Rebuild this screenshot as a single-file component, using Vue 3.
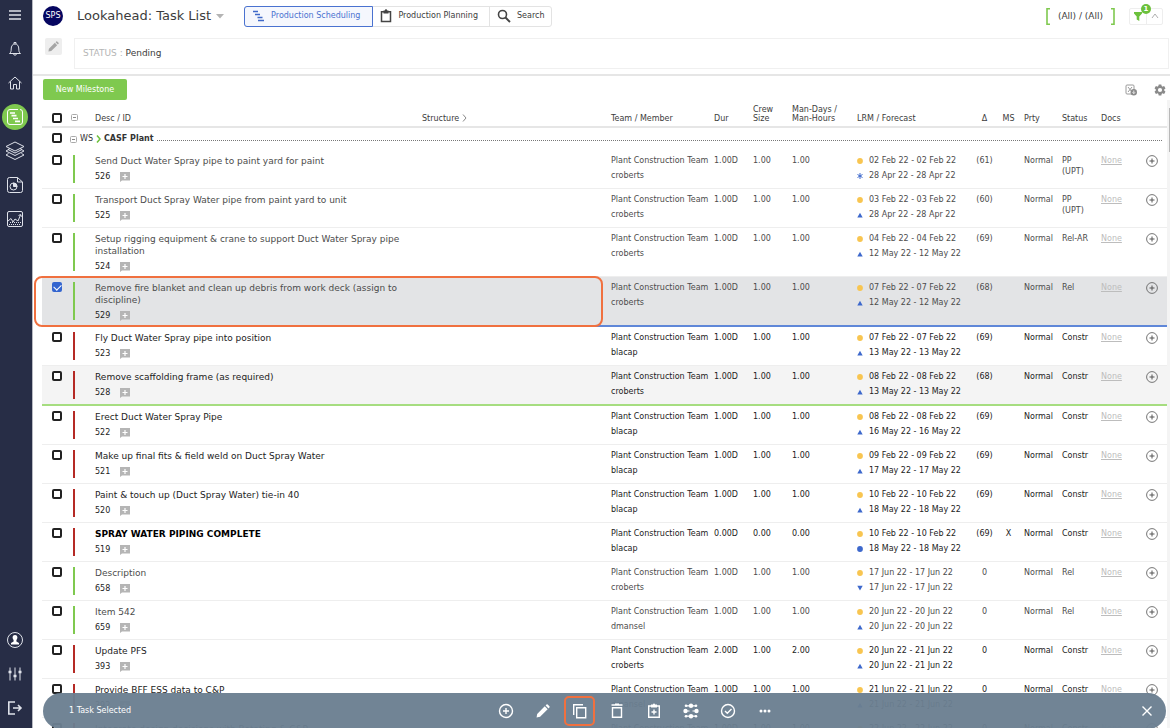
<script setup>
import { ref } from 'vue'

const base = { team: 'Plant Construction Team', dur: '1.00D', crew: '1.00', man: '1.00', mark: 'up', status: 'Constr' }
const tasks = ref([
  { id: 526, desc: 'Send Duct Water Spray pipe to paint yard for paint', member: 'croberts', lrm: '02 Feb 22 - 02 Feb 22', fc: '28 Apr 22 - 28 Apr 22', mark: 'star', delta: '(61)', status: 'PP (UPT)', green: true },
  { id: 525, desc: 'Transport Duct Spray Water pipe from paint yard to unit', member: 'croberts', lrm: '03 Feb 22 - 03 Feb 22', fc: '28 Apr 22 - 28 Apr 22', delta: '(60)', status: 'PP (UPT)', green: true },
  { id: 524, desc: 'Setup rigging equipment & crane to support Duct Water Spray pipe installation', member: 'croberts', lrm: '04 Feb 22 - 04 Feb 22', fc: '12 May 22 - 12 May 22', delta: '(69)', status: 'Rel-AR', green: true },
  { id: 529, desc: 'Remove fire blanket and clean up debris from work deck (assign to discipline)', member: 'croberts', lrm: '07 Feb 22 - 07 Feb 22', fc: '12 May 22 - 12 May 22', delta: '(68)', status: 'Rel', green: true, checked: true, kind: 'selected' },
  { id: 523, desc: 'Fly Duct Water Spray pipe into position', member: 'blacap', lrm: '07 Feb 22 - 07 Feb 22', fc: '13 May 22 - 13 May 22', delta: '(69)' },
  { id: 528, desc: 'Remove scaffolding frame (as required)', member: 'croberts', lrm: '08 Feb 22 - 08 Feb 22', fc: '13 May 22 - 13 May 22', delta: '(68)', kind: 'today' },
  { id: 522, desc: 'Erect Duct Water Spray Pipe', member: 'blacap', lrm: '08 Feb 22 - 08 Feb 22', fc: '16 May 22 - 16 May 22', delta: '(69)' },
  { id: 521, desc: 'Make up final fits & field weld on Duct Spray Water', member: 'blacap', lrm: '09 Feb 22 - 09 Feb 22', fc: '17 May 22 - 17 May 22', delta: '(69)' },
  { id: 520, desc: 'Paint & touch up (Duct Spray Water) tie-in 40', member: 'blacap', lrm: '10 Feb 22 - 10 Feb 22', fc: '18 May 22 - 18 May 22', delta: '(69)' },
  { id: 519, desc: 'SPRAY WATER PIPING COMPLETE', member: 'blacap', dur: '0.00D', crew: '0.00', man: '0.00', lrm: '10 Feb 22 - 10 Feb 22', fc: '18 May 22 - 18 May 22', mark: 'dot', delta: '(69)', ms: 'X', kind: 'milestone' },
  { id: 658, desc: 'Description', member: 'croberts', lrm: '17 Jun 22 - 17 Jun 22', fc: '17 Jun 22 - 17 Jun 22', mark: 'down', delta: '0', status: 'Rel', green: true },
  { id: 659, desc: 'Item 542', member: 'dmansel', lrm: '20 Jun 22 - 20 Jun 22', fc: '20 Jun 22 - 20 Jun 22', delta: '0', status: 'Rel', green: true },
  { id: 393, desc: 'Update PFS', member: 'croberts', dur: '2.00D', man: '2.00', lrm: '20 Jun 22 - 21 Jun 22', fc: '20 Jun 22 - 21 Jun 22', delta: '0' },
  { id: 392, desc: 'Provide BFF ESS data to C&P', member: 'dmansel', lrm: '21 Jun 22 - 21 Jun 22', fc: '21 Jun 22 - 21 Jun 22', delta: '0' },
  { id: 391, desc: 'Integrate design decisions with Rotating & C&P', member: 'dmansel', lrm: '22 Jun 22 - 22 Jun 22', fc: '22 Jun 22 - 22 Jun 22', delta: '0' }
].map(t => ({ ...base, ...t })))
</script>

<template>
  <div class="app">
    <nav class="side" aria-label="Main">
      <button class="nav" aria-label="Menu"><svg width="14" height="12" viewBox="0 0 14 12"><path d="M1 2h12M1 6h12M1 10h12" stroke-width="1.6" /></svg></button>
      <button class="nav" aria-label="Notifications"><svg width="16" height="16" viewBox="0 0 16 16"><path d="M2.500 12.500h11c-1.300-1-1.700-2-1.700-4.500 0-3-1.300-5-3.800-5S4.200 5 4.200 8c0 2.500-.4 3.500-1.700 4.500zM7 3V1.500h2V3M6.500 13c.3 1.600 2.700 1.600 3 0" /></svg></button>
      <button class="nav" aria-label="Home"><svg width="16" height="16" viewBox="0 0 16 16"><path d="M1.500 8L8 2l6.500 6M3.500 6.500V14h3V9.500h3V14h3V6.500" /></svg></button>
      <button class="nav on" aria-label="Scheduling"><svg width="18" height="18" viewBox="0 0 18 18"><path d="M12 1.500H4a2.500 2.500 0 0 0-2.500 2.500v10A2.500 2.500 0 0 0 4 16.500h10a2.500 2.500 0 0 0 2.500-2.500V4A2.500 2.500 0 0 0 14 1.500" /><path d="M4 5h5M5.500 7.700h5M7 10.500h5M9 13.300h5" stroke-width="1.700" /></svg></button>
      <button class="nav" aria-label="Layers"><svg width="22" height="22" viewBox="0 0 22 22"><path d="M11 2l9 4.500-9 4.500-9-4.500zM4.500 9.500L2 11l9 4.500 9-4.500-2.500-1.500M4.500 13.500L2 15l9 4.500 9-4.500-2.500-1.500M6 8.500l-2 1 7 3.500 7-3.500-2-1" /></svg></button>
      <button class="nav" aria-label="Reports"><svg width="18" height="18" viewBox="0 0 18 18"><path d="M3.500 1.500h8l5 4.500v8.500a2 2 0 0 1-2 2h-11a2 2 0 0 1-2-2v-11a2 2 0 0 1 2-2zM11.500 1.500V6h5" /><circle cx="7.500" cy="10.500" r="3.500" /><path d="M7.500 10.500V7a3.500 3.500 0 0 1 3.500 3.500z" fill="#dfe2ea" /></svg></button>
      <button class="nav" aria-label="Analytics"><svg width="18" height="18" viewBox="0 0 18 18"><rect x="1.500" y="1.500" width="15" height="15" rx="1.500" /><path d="M2 11l3-2.500 2 3.500 2-3 3 2 2.500-6M12.500 5.500l2.200-1 .8 2.200" /><path d="M3 14.500h12M4 12.500h11" stroke-dasharray="1 1" /></svg></button>
      <span class="push"></span>
      <button class="nav" aria-label="Profile"><svg width="18" height="18" viewBox="0 0 18 18"><circle cx="9" cy="9" r="7.500" /><path d="M9 4c-1.700 0-2.500 1.200-2.400 2.800.1 1 .5 1.700 1 2.200v1.500L5 12v1.500h8V12l-2.600-1.500V9c.5-.5.9-1.200 1-2.200C11.500 5.200 10.700 4 9 4z" fill="#fff" stroke="none" /></svg></button>
      <button class="nav" aria-label="Settings"><svg width="16" height="16" viewBox="0 0 16 16"><path d="M3 1.500v13M8 1.500v13M13 1.500v13" /><path d="M1.500 6h3M6.500 10h3M11.500 6h3" stroke-width="2.600" /></svg></button>
      <button class="nav" aria-label="Log out"><svg width="16" height="16" viewBox="0 0 16 16"><path d="M8 2H1.800v12H8M6 8h8M11 5l3 3-3 3" stroke-width="1.600" /></svg></button>
    </nav>

    <main class="main">
      <header class="top">
        <span class="logo">SPS</span>
        <h1 class="title">Lookahead: Task List</h1>
        <button class="caret" aria-label="Choose view"><svg width="8" height="5" viewBox="0 0 8 5"><path d="M0 0h8L4 4.500z" fill="#b4b4b4" /></svg></button>
        <div class="tabs">
          <button class="tab active"><svg width="12" height="12" viewBox="0 0 12 12"><path d="M0 1.500h5M2 4.500h5M4.500 7.500h5M5 10.500h6" stroke="#3f68c8" stroke-width="1.500" /></svg>Production Scheduling</button>
          <button class="tab"><svg width="12" height="14" viewBox="0 0 12 14"><path d="M1.500 2.700h9v9.800h-9z" stroke="#444" stroke-width="1.500" fill="none" /><path d="M3.500 1.500h1.300a1.200 1.200 0 0 1 2.400 0h1.300v3h-5z" fill="#444" /></svg>Production Planning</button>
          <button class="tab"><svg width="14" height="14" viewBox="0 0 14 14"><circle cx="5.500" cy="5.500" r="4" stroke="#444" stroke-width="1.600" fill="none" /><path d="M8.500 8.500l4.500 4.500" stroke="#444" stroke-width="1.900" /></svg>Search</button>
        </div>
        <div class="scope">
          <svg width="4" height="17" viewBox="0 0 4 17"><path d="M4 .8H1v15.400h3" /></svg>
          <span>(All) / (All)</span>
          <svg width="4" height="17" viewBox="0 0 4 17"><path d="M0 .8h3v15.400H0" /></svg>
        </div>
        <div class="filter">
          <button aria-label="Filter"><svg width="8" height="9" viewBox="0 0 8 9"><path d="M0 0h8v1.500L5.300 4.500V9L2.700 7.500v-3L0 1.500z" fill="#6cc13c" /></svg></button>
          <button aria-label="Collapse"><svg width="8" height="6" viewBox="0 0 8 6"><path d="M1 5l3-4 3 4" fill="none" stroke="#b0b0b0" /></svg></button>
          <span class="badge">1</span>
        </div>
      </header>

      <section class="status">
        <button class="edit" aria-label="Edit filter"><svg width="11" height="11" viewBox="0 0 24 24"><path d="M1 23l1-6L15 4l5 5L7 22zM16.500 2.500L18 1q1-1 2 0l3 3q1 1 0 2l-1.500 1.500z" fill="#a5a5a5" /></svg></button>
        <p class="crit"><span>STATUS : </span>Pending</p>
      </section>

      <section class="tools">
        <button class="new">New Milestone</button>
        <span class="push"></span>
        <button class="plain" aria-label="Export to spreadsheet"><svg width="12" height="12" viewBox="0 0 12 12"><rect x="1" y="1" width="8" height="9" rx="1" fill="none" stroke="#9a9a9a" /><path d="M3 3l4 5M7 3L3 8" stroke="#9a9a9a" /><circle cx="8.800" cy="8.200" r="3.200" fill="#8a8a8a" /><path d="M8.800 6.500v3M7.500 8.300l1.300 1.300 1.300-1.300" stroke="#fff" stroke-width=".8" fill="none" /></svg></button>
        <button class="plain" aria-label="Table settings"><svg width="14" height="14" viewBox="0 0 24 24"><path fill="#8a8a8a" d="M19.140 12.940a7 7 0 0 0 0-1.880l2.030-1.580a.5.5 0 0 0 .12-.61l-1.920-3.320a.5.5 0 0 0-.59-.22l-2.390.96a7 7 0 0 0-1.620-.94l-.36-2.540a.5.5 0 0 0-.48-.41h-3.840a.5.5 0 0 0-.47.41l-.36 2.540a7 7 0 0 0-1.620.94l-2.390-.96a.5.5 0 0 0-.59.22L2.740 8.870a.5.5 0 0 0 .12.610l2.030 1.580a7 7 0 0 0 0 1.880l-2.030 1.580a.5.5 0 0 0-.12.610l1.920 3.320c.12.220.37.290.59.220l2.390-.96c.5.380 1.030.7 1.620.94l.36 2.540c.05.240.24.410.48.410h3.840c.24 0 .44-.17.470-.41l.36-2.540a7 7 0 0 0 1.620-.94l2.390.96c.22.080.47 0 .59-.22l1.920-3.320a.5.5 0 0 0-.12-.61zM12 15.600a3.600 3.600 0 1 1 0-7.200 3.600 3.600 0 0 1 0 7.200z" /></svg></button>
      </section>

      <section class="list">
        <table>
          <colgroup>
            <col class="w-check"><col class="w-bar"><col class="w-desc"><col><col class="w-team"><col class="w-num"><col class="w-num"><col class="w-man"><col class="w-lrm"><col class="w-delta"><col class="w-ms"><col class="w-prty"><col class="w-num"><col class="w-num"><col class="w-add">
          </colgroup>
          <thead>
            <tr>
              <th><input type="checkbox" aria-label="Select all"></th>
              <th class="fold"><button class="plain" aria-label="Collapse all"><svg width="7" height="7" viewBox="0 0 7 7"><rect x=".5" y=".5" width="6" height="6" rx="1" fill="none" stroke="#aaa" /><path d="M2 3.500h3" stroke="#888" /></svg></button></th>
              <th>Desc / ID</th>
              <th>Structure <svg width="5" height="8" viewBox="0 0 5 8"><path d="M1 .5L4 4 1 7.500" fill="none" stroke="#888" /></svg></th>
              <th>Team / Member</th><th>Dur</th><th>Crew Size</th><th>Man-Days / Man-Hours</th><th>LRM / Forecast</th>
              <th class="center">Δ</th><th class="center ms">MS</th><th>Prty</th><th>Status</th><th>Docs</th><th></th>
            </tr>
          </thead>
          <tbody>
            <tr class="group">
              <td><input type="checkbox" aria-label="Select CASF Plant"></td>
              <td colspan="14">
                <div class="ws">
                  <button class="plain" aria-label="Collapse CASF Plant"><svg width="7" height="7" viewBox="0 0 7 7"><rect x=".5" y=".5" width="6" height="6" rx="1" fill="none" stroke="#aaa" /><path d="M2 3.500h3" stroke="#888" /></svg></button>
                  <span>WS</span>
                  <svg width="5" height="8" viewBox="0 0 5 8"><path d="M1 .5L4 4 1 7.500" fill="none" stroke="#6cc13c" stroke-width="1.500" /></svg>
                  <b>CASF Plant</b>
                  <i></i>
                </div>
              </td>
            </tr>
            <tr v-for="t in tasks" :key="t.id" :class="['task', t.kind, { soft: t.green }]">
              <td><input v-model="t.checked" type="checkbox" :aria-label="'Select task ' + t.id"><span v-if="t.kind === 'selected'" class="ring"></span></td>
              <td class="bar"></td>
              <td>
                <div class="name">{{ t.desc }}</div>
                <div class="id"><span>{{ t.id }}</span><button class="plain" aria-label="Add comment"><svg width="10" height="10" viewBox="0 0 10 10"><path d="M0 0h10v8.500H2L0 10z" fill="#b5b5b5" /><path d="M5 2v5M2.500 4.500h5" stroke="#fff" stroke-width="1.200" /></svg></button></div>
              </td>
              <td></td>
              <td class="two">{{ t.team }}<br>{{ t.member }}</td>
              <td class="two">{{ t.dur }}</td>
              <td class="two">{{ t.crew }}</td>
              <td class="two">{{ t.man }}</td>
              <td class="two dates">
                <div><svg width="6" height="6" viewBox="0 0 6 6"><circle cx="3" cy="3" r="2.900" fill="#f8c550" /></svg>{{ t.lrm }}</div>
                <div>
                  <svg width="6" height="6" viewBox="0 0 6 6">
                    <path v-if="t.mark === 'up'" d="M.3 5.500L3 .8l2.700 4.700z" fill="#3d68cc" />
                    <path v-else-if="t.mark === 'down'" d="M.3 .8L3 5.500 5.700.8z" fill="#3d68cc" />
                    <circle v-else-if="t.mark === 'dot'" cx="3" cy="3" r="2.900" fill="#3d68cc" />
                    <path v-else d="M3 0v6M.5 1.500l5 3M5.500 1.500l-5 3" stroke="#3d68cc" />
                  </svg>{{ t.fc }}
                </div>
              </td>
              <td class="two center">{{ t.delta }}</td>
              <td class="two center ms">{{ t.ms }}</td>
              <td class="two">Normal</td>
              <td class="stat">{{ t.status }}</td>
              <td class="two"><a href="#docs">None</a></td>
              <td class="add"><button class="plain" aria-label="Add task"><svg width="12" height="12" viewBox="0 0 12 12"><circle cx="6" cy="6" r="5.400" fill="none" stroke="#666" stroke-width=".9" /><path d="M6 3.500v5M3.500 6h5" stroke="#555" /></svg></button></td>
            </tr>
          </tbody>
        </table>
        <div class="track"><span></span></div>
      </section>
    </main>

    <footer class="actions">
      <span>1 Task Selected</span>
      <div class="acts">
        <button aria-label="Add"><svg width="16" height="16" viewBox="0 0 16 16"><circle cx="8" cy="8" r="6.500" /><path d="M8 5v6M5 8h6" /></svg></button>
        <button aria-label="Edit"><svg width="14" height="14" viewBox="0 0 24 24"><path d="M1 23l1-6L15 4l5 5L7 22zM16.500 2.500L18 1q1-1 2 0l3 3q1 1 0 2l-1.500 1.500z" fill="#fff" stroke="none" /></svg></button>
        <button class="hot" aria-label="Copy"><svg width="16" height="16" viewBox="0 0 16 16"><path d="M1.700 12V1.700H11M4.700 4.700h9v10h-9z" /></svg></button>
        <button aria-label="Delete"><svg width="14" height="16" viewBox="0 0 14 16"><path d="M2.500 4.700h9v9.600h-9zM1.500 2h11M5 1.200h4" /></svg></button>
        <button aria-label="Paste"><svg width="14" height="16" viewBox="0 0 14 16"><path d="M1.700 3h10.600v11.300H1.700zM7 6.500v5M4.500 9h5" /><path d="M4 1.500h2a1 1 0 0 1 2 0h2v3H4z" fill="#fff" stroke="none" /></svg></button>
        <button aria-label="Network"><svg width="16" height="16" viewBox="0 0 16 16"><g fill="#fff" stroke="none"><circle cx="8" cy="2.800" r="2.200" /><circle cx="8" cy="13.200" r="2.200" /><circle cx="2.500" cy="8" r="2.200" /><circle cx="13.500" cy="8" r="2.200" /><circle cx="3" cy="2.800" r="1.300" /><circle cx="13" cy="2.800" r="1.300" /><circle cx="3" cy="13.200" r="1.300" /><circle cx="13" cy="13.200" r="1.300" /></g><path d="M3 2.800h10M3 13.200h10M2.500 8h4M9.500 8h4" stroke-width="1.200" /></svg></button>
        <button aria-label="Complete"><svg width="16" height="16" viewBox="0 0 16 16"><circle cx="8" cy="8" r="6.500" /><path d="M5 8l2.300 2.300 4.200-4.300" /></svg></button>
        <button aria-label="More"><svg width="14" height="4" viewBox="0 0 14 4"><g fill="#fff" stroke="none"><circle cx="3" cy="2" r="1.500" /><circle cx="7" cy="2" r="1.500" /><circle cx="11" cy="2" r="1.500" /></g></svg></button>
      </div>
      <button class="close" aria-label="Clear selection"><svg width="12" height="12" viewBox="0 0 12 12"><path d="M1.500 1.500l9 9M10.500 1.500l-9 9" /></svg></button>
    </footer>
  </div>
</template>

<style>
body { margin: 0; background: #fff; }
</style>

<style scoped>
* { box-sizing: border-box; }
.app { position: relative; display: flex; height: 100vh; overflow: hidden; color: #3c3c3c; font: 8px/12px "DejaVu Sans", sans-serif; }
button { display: flex; align-items: center; justify-content: center; margin: 0; padding: 0; border: 0; background: none; color: inherit; font: inherit; cursor: pointer; }
svg { flex: none; }
.push { flex: 1; }
.side { flex: none; display: flex; flex-direction: column; align-items: center; gap: 8px; width: 33px; padding: 2px 2px 7px 0; background: #272d46; border-right: 1px solid #b8bac2; }
.nav { width: 26px; height: 26px; border-radius: 50%; }
.nav svg { fill: none; stroke: #dfe2ea; stroke-width: 1; }
.nav.on { background: #7fc94f; }
.nav.on svg { stroke: #fff; }
.main { flex: 1; min-width: 0; display: flex; flex-direction: column; }
.top { display: flex; align-items: center; height: 32px; padding: 0 7px 0 10px; }
.logo { display: flex; align-items: center; justify-content: center; width: 20px; height: 20px; border-radius: 50%; background: #060660; color: #fff; font-size: 8px; }
.title { margin: 0 5px 0 14px; font-size: 13px; line-height: 20px; font-weight: 400; white-space: nowrap; }
.tabs { display: flex; height: 21px; margin-left: 20px; border: 1px solid #e3e3e3; border-radius: 3px; }
.tab { gap: 6px; padding: 0 11px 0 7px; white-space: nowrap; border-right: 1px solid #e3e3e3; }
.tab:last-child { padding-right: 7px; border-right: 0; }
.tab.active { margin: -1px 0 -1px -1px; padding: 0 12px 0 8px; border: 1px solid #4a72d0; border-radius: 3px 0 0 3px; background: #f5f7fd; color: #4a72d0; }
.scope { display: flex; align-items: center; gap: 8px; margin-left: auto; font-size: 9px; white-space: nowrap; }
.scope svg { fill: none; stroke: #7fc94f; stroke-width: 1.600; }
.filter { position: relative; display: flex; height: 17px; margin-left: 14px; border: 1px solid #eee; border-radius: 2px; }
.filter button { width: 16px; }
.filter button + button { border-left: 1px solid #eee; }
.badge { position: absolute; top: -5px; left: 11px; width: 10px; height: 10px; border-radius: 50%; background: #6cc13c; color: #fff; font-size: 7px; font-weight: 700; line-height: 10px; text-align: center; }
.status { display: flex; align-items: flex-start; gap: 12px; padding: 6px 1px 5px 12px; border-bottom: 2px solid #e6e6e6; }
.edit { width: 17px; height: 17px; border-radius: 2px; background: #eee; }
.crit { flex: 1; margin: 0; padding: 0 8px; font-size: 9px; line-height: 29px; border: 1px solid #f0f0f0; white-space: pre; }
.crit span { color: #b5b5b5; }
.tools { display: flex; align-items: center; gap: 16px; padding: 3px 3px 0 10px; }
.new { width: 84px; height: 21px; border-radius: 2px; background: #7fc94f; color: #fff; }
.list { flex: 1; min-height: 0; display: flex; align-items: flex-start; padding-left: 9px; overflow: hidden; }
.track { width: 3px; height: 100%; background: #f4f4f4; padding: 8px 0 0 2px; }
.track span { display: block; height: 44px; background: #b8b8b8; }
table { flex: 1; width: 100%; table-layout: fixed; border-collapse: separate; border-spacing: 0; }
th, td { padding: 0; text-align: left; vertical-align: top; }
.w-check { width: 24px; }
.w-bar { width: 29px; }
.w-desc { width: 327px; }
.w-team { width: 103px; }
.w-num { width: 39px; }
.w-man { width: 65px; }
.w-lrm { width: 113px; }
.w-delta { width: 29px; }
.w-ms { width: 25px; }
.w-prty { width: 38px; }
.w-add { width: 27px; }
th { height: 28px; padding-bottom: 3px; font-weight: 400; line-height: 9px; vertical-align: bottom; border-bottom: 2px solid #e6e6e6; }
th svg { vertical-align: -1px; }
input { appearance: none; display: block; position: relative; width: 10px; height: 10px; margin: 0 0 0 10px; border: 2px solid #222; border-radius: 2px; background: #fff; }
input:checked { border-color: #3465cf; background: #3465cf; }
input:checked::after { content: ""; position: absolute; left: 1px; top: -1px; width: 4px; height: 6px; border: solid #fff; border-width: 0 1px 1px 0; transform: rotate(45deg); }
.fold button { margin: 0 0 2px 5px; }
.center { text-align: center; }
.ms { padding-right: 6px; }
.group td { height: 22px; padding-top: 5px; }
.ws { display: flex; align-items: center; gap: 3px; padding: 0 5px 0 4px; color: #333; }
.ws i { flex: 1; align-self: flex-end; margin: 0 0 4px; border-bottom: 1px dotted #777; }
.task { position: relative; color: #222; }
.task.soft { color: #4c4c4c; }
.task td { height: 39px; padding-top: 5px; border-bottom: 1px solid #eee; }
.task .two { padding-top: 3px; line-height: 15px; white-space: nowrap; }
.task .bar { background: linear-gradient(#b52a25, #b52a25) 7px 5px / 2px calc(100% - 10px) no-repeat; }
.task.soft .bar { background-image: linear-gradient(#7fc94f, #7fc94f); }
.name { width: 316px; font-size: 9px; }
.id { display: flex; align-items: center; gap: 10px; margin: 4px 0 3px; color: #222; }
.dates div { display: flex; align-items: center; gap: 6px; }
.stat { line-height: 11px; padding-right: 8px; }
.task a { color: #bdbdbd; text-decoration: underline; }
.add { padding-left: 6px; }
.task.today td { height: 40px; background-color: #f4f4f4; border-bottom: 2px solid #a6dd80; }
.task.selected td { height: 50px; background-color: #e3e4e6; border-bottom: 2px solid #5f87d8; }
.milestone .name { color: #000; font-weight: 700; }
.ring { position: absolute; z-index: 1; top: -1px; bottom: 0; left: -8px; right: 564px; border: 2px solid #f0703f; border-radius: 8px; }
.actions { position: absolute; z-index: 2; left: 43px; right: 4px; bottom: -1px; display: grid; grid-template-columns: 421px auto 1fr; align-items: center; height: 36px; padding: 0 13px 0 26px; border-radius: 18px; background: rgba(107, 127, 145, .96); color: #fff; }
.actions svg { fill: none; stroke: #fff; stroke-width: 1.400; }
.acts { display: flex; gap: 6px; }
.acts button { width: 31px; height: 30px; border-radius: 5px; }
.acts .hot { border: 2px solid #f0703f; }
.close { justify-self: end; }
</style>
